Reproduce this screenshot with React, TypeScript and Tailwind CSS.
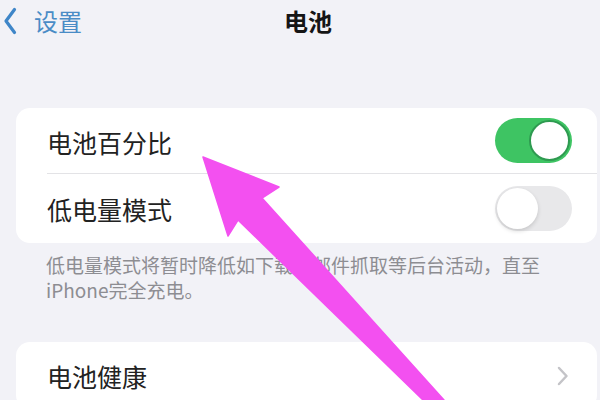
import React from "react";

function Toggle({ on }: { on: boolean }) {
  return (
    <div
      className={
        on
          ? "w-[77px] h-[45px] rounded-full bg-[#3ec463] p-[2px] flex justify-end"
          : "w-[77px] h-[45px] rounded-full bg-[#e8e8ea] p-[2px] flex justify-start"
      }
    >
      <div
        className={
          on
            ? "w-[41px] h-[41px] rounded-full bg-white border-[2px] border-[#2e9a50]"
            : "w-[41px] h-[41px] rounded-full bg-white shadow-[0_2px_4px_rgba(0,0,0,0.15)]"
        }
      />
    </div>
  );
}

export default function App() {
  return (
    <div
      className="relative w-[600px] h-[400px] overflow-hidden bg-[#f2f2f7]"
      style={{ fontFamily: '"Noto Sans CJK SC", "Noto Sans", sans-serif' }}
    >
      {/* header */}
      <div className="h-[42px] flex items-center relative">
        <div className="flex items-center pl-[3px]">
          <svg width="14" height="28" viewBox="0 0 14 28" fill="none">
            <path d="M11.5 2.5 L3 14 L11.5 25.5" stroke="#3f86c8" strokeWidth="3.2" strokeLinecap="round" strokeLinejoin="round" />
          </svg>
          <span className="ml-[17px] text-[24px] leading-[30px] text-[#4a8cc6]">设置</span>
        </div>
        <div className="absolute left-[284px] top-0 h-[42px] flex items-center">
          <span className="text-[24px] leading-[30px] font-semibold text-[#151515]">电池</span>
        </div>
      </div>

      {/* card 1 */}
      <div className="mt-[66px] ml-[16px] mr-[3px] bg-white rounded-[14px]">
        <div className="h-[65px] flex items-center justify-between pl-[31px] pr-[25px]">
          <span className="text-[25px] leading-[30px] text-[#222] pt-[3px]">电池百分比</span>
          <Toggle on={true} />
        </div>
        <div className="ml-[31px] h-px bg-[#e3e3e6]" />
        <div className="h-[69px] flex items-center justify-between pl-[31px] pr-[25px]">
          <span className="text-[25px] leading-[30px] text-[#222]">低电量模式</span>
          <Toggle on={false} />
        </div>
      </div>

      {/* footnote */}
      <p className="mt-[9px] pl-[46px] text-[19px] leading-[25px] text-[#8d8d92]">
        低电量模式将暂时降低如下载和邮件抓取等后台活动，直至
        <br />
        iPhone完全充电。
      </p>

      {/* card 2 */}
      <div className="mt-[40px] ml-[16px] mr-[3px] bg-white rounded-[14px]">
        <div className="h-[67px] flex items-center justify-between pl-[31px] pr-[28px]">
          <span className="text-[25px] leading-[30px] text-[#222]">电池健康</span>
          <svg width="12" height="20" viewBox="0 0 12 20" fill="none">
            <path d="M2 2 L9.5 10 L2 18" stroke="#c4c4c8" strokeWidth="2.5" strokeLinecap="round" strokeLinejoin="round" />
          </svg>
        </div>
      </div>

      {/* arrow overlay */}
      <svg className="absolute left-0 top-0" width="600" height="400" viewBox="0 0 600 400">
        <polygon
          points="203,157 279,187 262,198 444,400 423,400 238,220 228,236"
          fill="#f350f0"
          stroke="#f350f0"
          strokeWidth="1.5"
          strokeLinejoin="round"
        />
      </svg>
    </div>
  );
}
